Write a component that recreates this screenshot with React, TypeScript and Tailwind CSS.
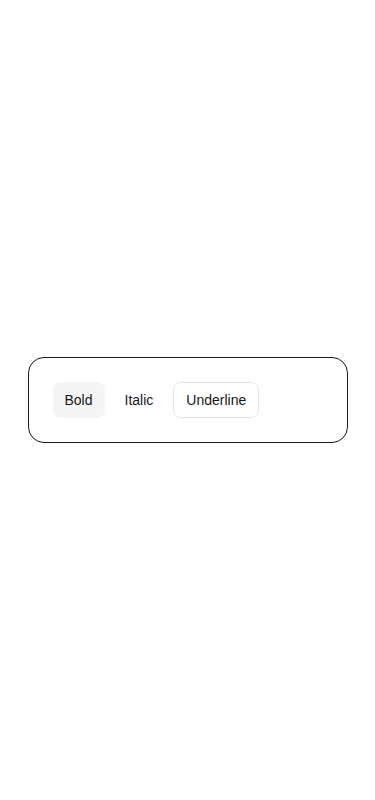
import { useState } from "react";

export default function App() {
  const [active, setActive] = useState("Bold");
  const items = ["Bold", "Italic", "Underline"];

  return (
    <div
      className="min-h-screen bg-white flex items-center justify-center"
      style={{ fontFamily: '"Liberation Sans", Arial, sans-serif' }}
    >
      <div className="w-80 rounded-2xl border border-[#1a1a1a] bg-white p-6">
        <div className="flex items-center gap-2">
          {items.map((item) => (
            <button
              key={item}
              onClick={() => setActive(item)}
              className={
                item === "Underline"
                  ? "h-9 px-3 rounded-lg text-sm text-[#171717] border border-[#e5e5e5] bg-white"
                  : item === active
                  ? "h-9 px-3 rounded-lg text-sm text-[#171717] bg-[#f5f5f5]"
                  : "h-9 px-3 rounded-lg text-sm text-[#171717]"
              }
            >
              {item}
            </button>
          ))}
        </div>
      </div>
    </div>
  );
}
